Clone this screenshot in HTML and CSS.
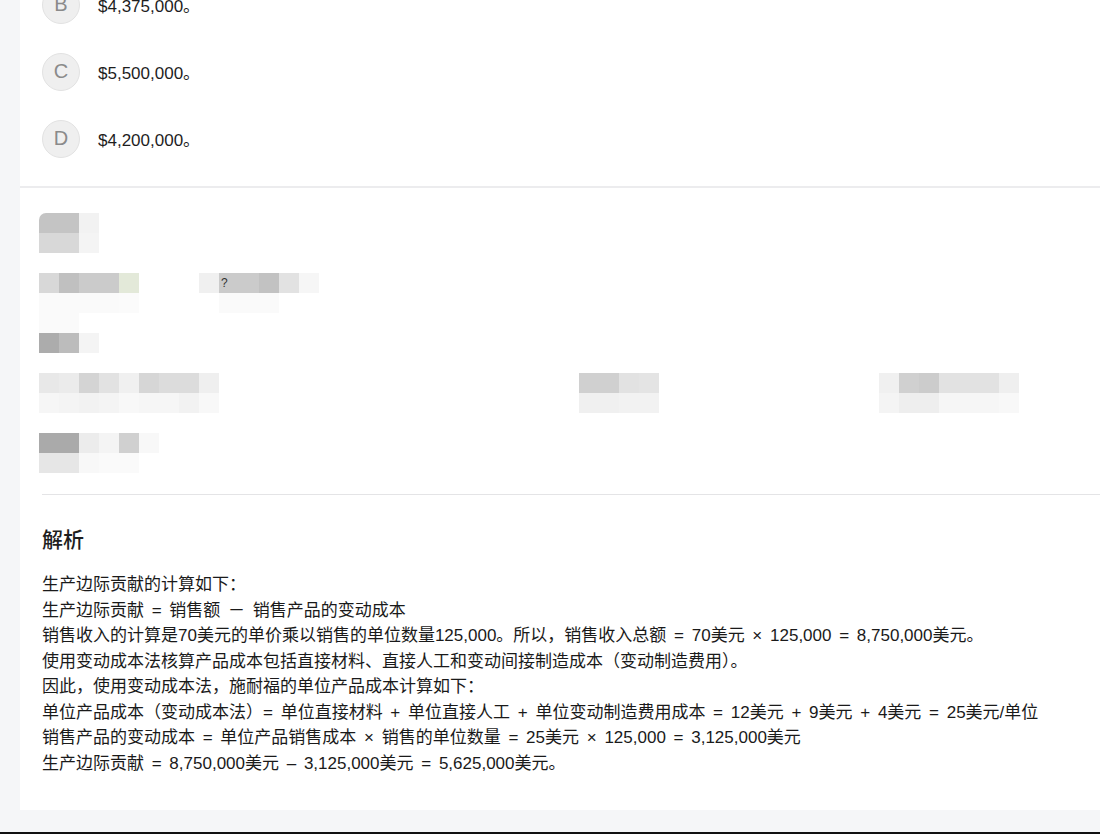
FILE: index.html
```html
<!DOCTYPE html>
<html lang="zh-CN">
<head>
<meta charset="utf-8">
<title>解析</title>
<link rel="stylesheet" href="styles.css">
</head>
<body>
<div class="page">
  <section class="card options-card">
    <div class="option"><span class="badge">B</span><span class="opt-text">$4,375,000。</span></div>
    <div class="option"><span class="badge">C</span><span class="opt-text">$5,500,000。</span></div>
    <div class="option"><span class="badge">D</span><span class="opt-text">$4,200,000。</span></div>
  </section>
  <div class="gap"></div>
  <section class="card detail-card">
    <div class="mosaic">
      <div class="mrow">
        <div class="group"><i class="s4 round"></i><i class="s4"></i><i class="sf2"></i></div>
      </div>
      <div class="mrow">
        <div class="group"><i class="s8"></i><i class="s8"></i><i class="sf4"></i></div>
      </div>
      <div class="mrow spaced">
        <div class="group"><i class="s8"></i><i class="s0"></i><i class="s6"></i><i class="s6"></i><i class="sg"></i></div>
        <div class="group g-q"><i class="sf0"></i><i class="s6 glyph">?</i><i class="s6"></i><i class="s2"></i><i class="se2"></i><i class="sf6"></i></div>
      </div>
      <div class="mrow">
        <div class="group"><i class="sfa"></i><i class="sfa"></i><i class="sfa"></i><i class="sfa"></i><i class="sfb"></i></div>
        <div class="group g-q2"><i class="sfa"></i><i class="sfa"></i><i class="sfa"></i></div>
      </div>
      <div class="mrow">
        <div class="group"><i class="sfa"></i><i class="sfa"></i></div>
      </div>
      <div class="mrow">
        <div class="group"><i class="sac"></i><i class="sbc"></i><i class="sf4"></i></div>
      </div>
      <div class="mrow spaced">
        <div class="group"><i class="se8"></i><i class="seb"></i><i class="sd4"></i><i class="se2"></i><i class="sf0"></i><i class="sd6"></i><i class="sdc"></i><i class="sdc"></i><i class="sef"></i></div>
        <div class="group g-mid"><i class="sd0"></i><i class="sd0"></i><i class="se2"></i><i class="se4"></i></div>
        <div class="group g-right"><i class="sf0"></i><i class="sd0"></i><i class="scc"></i><i class="se2"></i><i class="se2"></i><i class="se2"></i><i class="sef"></i></div>
      </div>
      <div class="mrow">
        <div class="group"><i class="sf6"></i><i class="sf4"></i><i class="sf2"></i><i class="sf4"></i><i class="sf8"></i><i class="sf6"></i><i class="sf6"></i><i class="sf2"></i><i class="sf8"></i></div>
        <div class="group g-mid"><i class="sf0"></i><i class="sf0"></i><i class="sf2"></i><i class="sf2"></i></div>
        <div class="group g-right"><i class="sf4"></i><i class="see"></i><i class="see"></i><i class="sf6"></i><i class="sf6"></i><i class="sf6"></i><i class="sf8"></i></div>
      </div>
      <div class="mrow spaced">
        <div class="group"><i class="saa"></i><i class="saa"></i><i class="sec"></i><i class="sf4"></i><i class="sd0"></i><i class="sf8"></i></div>
      </div>
      <div class="mrow">
        <div class="group"><i class="se6"></i><i class="se6"></i><i class="sf8"></i><i class="sfa"></i><i class="sfa"></i></div>
      </div>
    </div>

    <hr class="divider">

    <h2 class="title">解析</h2>
    <div class="analysis">
      <p>生产边际贡献的计算如下：</p>
      <p>生产边际贡献 = 销售额 － 销售产品的变动成本</p>
      <p>销售收入的计算是70美元的单价乘以销售的单位数量125,000。所以，销售收入总额 = 70美元 × 125,000 = 8,750,000美元。</p>
      <p>使用变动成本法核算产品成本包括直接材料、直接人工和变动间接制造成本（变动制造费用）。</p>
      <p>因此，使用变动成本法，施耐福的单位产品成本计算如下：</p>
      <p>单位产品成本（变动成本法）= 单位直接材料 + 单位直接人工 + 单位变动制造费用成本 = 12美元 + 9美元 + 4美元 = 25美元/单位</p>
      <p>销售产品的变动成本 = 单位产品销售成本 × 销售的单位数量 = 25美元 × 125,000 = 3,125,000美元</p>
      <p>生产边际贡献 = 8,750,000美元 – 3,125,000美元 = 5,625,000美元。</p>
    </div>
  </section>
  <div class="bottom-space"></div>
  <div class="bottom-line"></div>
</div>
</body>
</html>
```

FILE: styles.css
```css
* { box-sizing: border-box; }
html, body {
  margin: 0;
  padding: 0;
  background: #f5f6f8;
  font-family: "Liberation Sans", "Noto Sans CJK SC", sans-serif;
  color: #1e1e1e;
  overflow: hidden;
}
.page {
  height: 834px;
  padding-left: 20px;
  display: flex;
  flex-direction: column;
}
.card {
  background: #ffffff;
}
.options-card {
  margin-top: -29px;
  padding: 0 0 14px 22px;
}
.option {
  height: 67px;
  display: flex;
  align-items: center;
  gap: 18px;
}
.badge {
  width: 38px;
  height: 38px;
  border-radius: 50%;
  background: #efefef;
  border: 1px solid #e2e2e2;
  color: #8a8a8a;
  font-size: 20px;
  display: flex;
  align-items: center;
  justify-content: center;
}
.opt-text {
  font-size: 17px;
  color: #1e1e1e;
}
.gap {
  height: 2px;
  background: #ececee;
}
.detail-card {
  padding: 25px 0 34px 22px;
}
.mosaic {
  margin-left: -3px;
  display: flex;
  flex-direction: column;
}
.mrow {
  display: flex;
  height: 20px;
}
.mrow.spaced { margin-top: 20px; }
.group { display: flex; }
.group i {
  display: block;
  width: 20px;
  height: 20px;
  font-style: normal;
}
.g-q { margin-left: 60px; }
.g-q2 { margin-left: 80px; }
.g-mid { margin-left: 360px; }
.g-right { margin-left: 220px; }
.round { border-top-left-radius: 7px; }
.glyph {
  font-size: 12px;
  line-height: 20px;
  color: #333;
  text-indent: 2px;
}
.s0 { background: #c0c0c0; }
.s2 { background: #c2c2c2; }
.s4 { background: #c4c4c4; }
.s6 { background: #cbcbcb; }
.s8 { background: #d8d8d8; }
.sg { background: #e3e9d9; }
.saa { background: #aaaaaa; }
.sac { background: #acacac; }
.sbc { background: #bcbcbc; }
.scc { background: #cccccc; }
.sd0 { background: #d0d0d0; }
.sd4 { background: #d4d4d4; }
.sd6 { background: #d6d6d6; }
.sdc { background: #dcdcdc; }
.se2 { background: #e2e2e2; }
.se4 { background: #e4e4e4; }
.se6 { background: #e6e6e6; }
.se8 { background: #e8e8e8; }
.seb { background: #ebebeb; }
.sec { background: #ececec; }
.see { background: #eeeeee; }
.sef { background: #efefef; }
.sf0 { background: #f0f0f0; }
.sf2 { background: #f2f2f2; }
.sf4 { background: #f4f4f4; }
.sf6 { background: #f6f6f6; }
.sf8 { background: #f8f8f8; }
.sfa { background: #fafafa; }
.sfb { background: #fbfbfb; }
.divider {
  margin: 21px 0 0 0;
  border: 0;
  height: 1px;
  background: #e4e4e6;
}
.title {
  margin: 31px 0 0 0;
  font-size: 21px;
  line-height: 28px;
  font-weight: 500;
  color: #1e1e1e;
}
.analysis {
  margin-top: 18px;
  font-size: 17px;
  line-height: 25.5px;
  word-spacing: 3px;
  color: #1a1a1a;
}
.analysis p {
  margin: 0;
  white-space: nowrap;
}
.bottom-space {
  flex: 1;
}
.bottom-line {
  height: 2px;
  margin-left: -20px;
  background: #111;
}
```
